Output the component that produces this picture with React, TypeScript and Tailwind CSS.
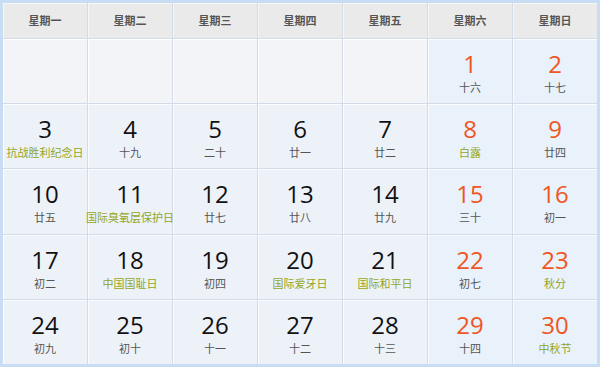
const weekdays = ["星期一", "星期二", "星期三", "星期四", "星期五", "星期六", "星期日"];

type Day = { d: number; sub: string; fest?: boolean } | null;

const days: Day[] = [
  null, null, null, null, null,
  { d: 1, sub: "十六" },
  { d: 2, sub: "十七" },
  { d: 3, sub: "抗战胜利纪念日", fest: true },
  { d: 4, sub: "十九" },
  { d: 5, sub: "二十" },
  { d: 6, sub: "廿一" },
  { d: 7, sub: "廿二" },
  { d: 8, sub: "白露", fest: true },
  { d: 9, sub: "廿四" },
  { d: 10, sub: "廿五" },
  { d: 11, sub: "国际臭氧层保护日", fest: true },
  { d: 12, sub: "廿七" },
  { d: 13, sub: "廿八" },
  { d: 14, sub: "廿九" },
  { d: 15, sub: "三十" },
  { d: 16, sub: "初一" },
  { d: 17, sub: "初二" },
  { d: 18, sub: "中国国耻日", fest: true },
  { d: 19, sub: "初四" },
  { d: 20, sub: "国际爱牙日", fest: true },
  { d: 21, sub: "国际和平日", fest: true },
  { d: 22, sub: "初七" },
  { d: 23, sub: "秋分", fest: true },
  { d: 24, sub: "初九" },
  { d: 25, sub: "初十" },
  { d: 26, sub: "十一" },
  { d: 27, sub: "十二" },
  { d: 28, sub: "十三" },
  { d: 29, sub: "十四" },
  { d: 30, sub: "中秋节", fest: true },
];

export default function App() {
  return (
    <div
      className="w-[600px] h-[367px] bg-[#c8dcf3] p-[3px]"
      style={{ fontFamily: '"Noto Sans CJK SC", "DejaVu Sans", sans-serif' }}
    >
      <div className="grid grid-cols-7 h-full bg-[#d3dbe6] gap-px grid-rows-[35px_repeat(5,1fr)]">
        {weekdays.map((w) => (
          <div
            key={w}
            className="bg-[#eaeaea] flex items-center justify-center text-[11px] font-bold text-[#555] shadow-[inset_1px_1px_0_#f6f6f6]"
          >
            {w}
          </div>
        ))}
        {days.map((day, i) => {
          const weekend = i % 7 >= 5;
          if (!day)
            return (
              <div key={i} className="bg-[#f3f4f7] shadow-[inset_1px_1px_0_#ffffff]" />
            );
          return (
            <div
              key={i}
              className={`flex flex-col items-center pt-[11px] shadow-[inset_1px_1px_0_#fafcff] ${
                weekend ? "bg-[#e9f1fb]" : "bg-[#edf2f9]"
              }`}
            >
              <span
                className={`text-[24px] leading-[28px] font-medium ${
                  weekend ? "text-[#f0561f]" : "text-[#111]"
                }`}
                style={{ fontFamily: '"Open Sans", sans-serif' }}
              >
                {day.d}
              </span>
              <span
                className={`text-[11px] leading-[14px] mt-[2px] whitespace-nowrap ${
                  day.fest ? "text-[#94a51c]" : "text-[#555]"
                }`}
              >
                {day.sub}
              </span>
            </div>
          );
        })}
      </div>
    </div>
  );
}
